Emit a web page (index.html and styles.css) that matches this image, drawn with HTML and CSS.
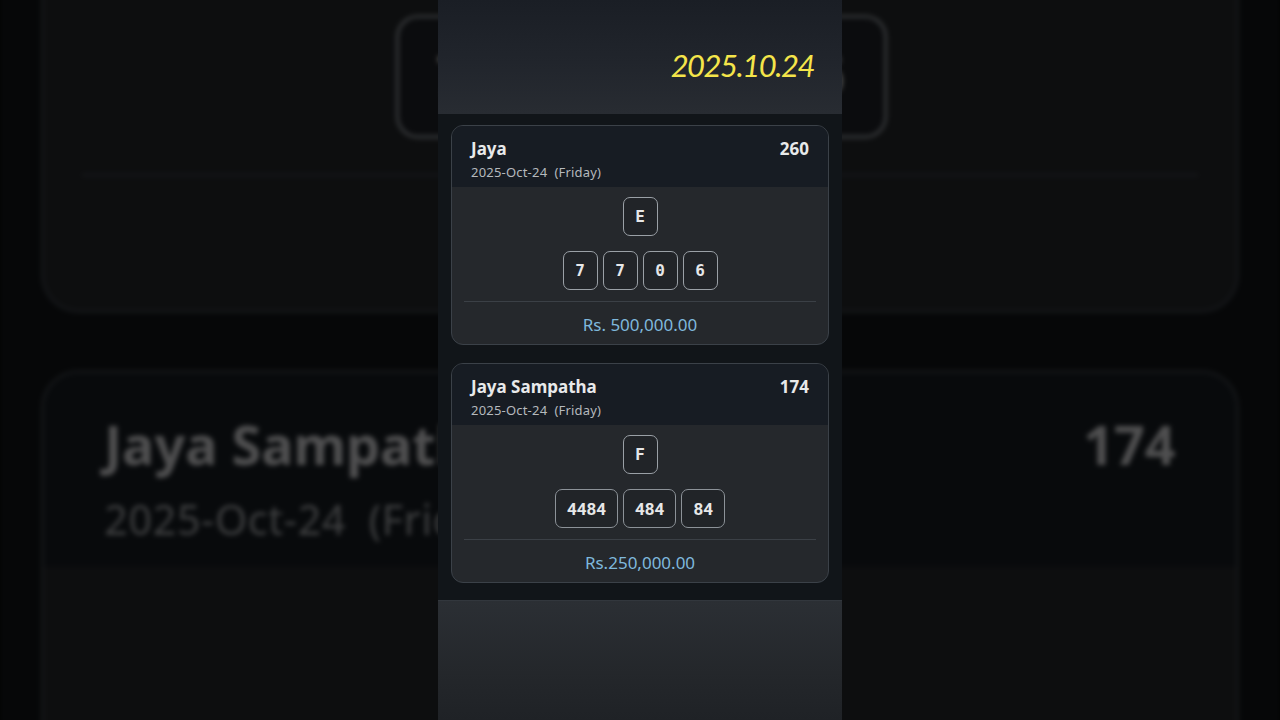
FILE: index.html
```html
<!DOCTYPE html>
<html lang="en">
<head>
<meta charset="utf-8">
<title>Results 2025.10.24</title>
<link rel="stylesheet" href="styles.css">
</head>
<body>
<div class="stage">
  <div class="column ghost" aria-hidden="true">
    <header class="hero"><span class="hero-date">2025.10.24</span></header>
    <section class="list">
      <article class="card">
        <div class="card-head">
          <div class="head-row"><span class="title">Jaya</span><span class="draw">260</span></div>
          <div class="sub">2025-Oct-24&nbsp;&nbsp;(Friday)</div>
        </div>
        <div class="card-body">
          <div class="balls"><span class="ball mono">E</span></div>
          <div class="balls"><span class="ball mono">7</span><span class="ball mono">7</span><span class="ball mono">0</span><span class="ball mono">6</span></div>
          <div class="prize">Rs. 500,000.00</div>
        </div>
      </article>
      <article class="card">
        <div class="card-head">
          <div class="head-row"><span class="title">Jaya Sampatha</span><span class="draw">174</span></div>
          <div class="sub">2025-Oct-24&nbsp;&nbsp;(Friday)</div>
        </div>
        <div class="card-body">
          <div class="balls"><span class="ball">F</span></div>
          <div class="balls"><span class="ball wide">4484</span><span class="ball wide">484</span><span class="ball wide">84</span></div>
          <div class="prize">Rs.250,000.00</div>
        </div>
      </article>
    </section>
    <footer class="foot"></footer>
  </div>

  <main class="column front">
    <header class="hero"><span class="hero-date">2025.10.24</span></header>
    <section class="list">
      <article class="card">
        <div class="card-head">
          <div class="head-row"><span class="title">Jaya</span><span class="draw">260</span></div>
          <div class="sub">2025-Oct-24&nbsp;&nbsp;(Friday)</div>
        </div>
        <div class="card-body">
          <div class="balls"><span class="ball mono">E</span></div>
          <div class="balls"><span class="ball mono">7</span><span class="ball mono">7</span><span class="ball mono">0</span><span class="ball mono">6</span></div>
          <div class="prize">Rs. 500,000.00</div>
        </div>
      </article>
      <article class="card">
        <div class="card-head">
          <div class="head-row"><span class="title">Jaya Sampatha</span><span class="draw">174</span></div>
          <div class="sub">2025-Oct-24&nbsp;&nbsp;(Friday)</div>
        </div>
        <div class="card-body">
          <div class="balls"><span class="ball">F</span></div>
          <div class="balls"><span class="ball wide">4484</span><span class="ball wide">484</span><span class="ball wide">84</span></div>
          <div class="prize">Rs.250,000.00</div>
        </div>
      </article>
    </section>
    <footer class="foot"></footer>
  </main>
</div>
</body>
</html>
```
FILE: styles.css
```css
* { box-sizing: border-box; }

html, body {
  margin: 0;
  padding: 0;
  background: #000;
}

body {
  font-family: "Noto Sans", "Open Sans", sans-serif;
  color: #e8e8e8;
}

.stage {
  width: 1280px;
  height: 720px;
  overflow: hidden;
  display: grid;
  background: #000;
}

.column {
  grid-area: 1 / 1;
  justify-self: center;
  width: 404px;
  height: 720px;
  display: flex;
  flex-direction: column;
  background: #111519;
}

.ghost {
  z-index: 0;
  transform: scale(3.17);
  transform-origin: 202px 359.8px;
  filter: brightness(0.34) blur(0.8px);
}

.front {
  z-index: 1;
}

.hero {
  height: 114px;
  flex: 0 0 114px;
  display: flex;
  align-items: center;
  justify-content: flex-end;
  padding: 16px 28px 0 0;
  background: linear-gradient(180deg, #1a1e25 0%, #21252c 55%, #282c32 100%);
}

.hero-date {
  font-family: Lato, "Noto Sans", sans-serif;
  font-style: italic;
  font-size: 31px;
  letter-spacing: -1.5px;
  color: #f4e54a;
  line-height: 1;
}

.list {
  display: flex;
  flex-direction: column;
  gap: 18px;
  padding: 11px 13px 17px;
  background: #111519;
}

.card {
  border: 1px solid #3b4148;
  border-radius: 12px;
  overflow: hidden;
  background: #25282c;
}

.card-head {
  background: #171c23;
  padding: 11px 19px 6px;
}

.head-row {
  display: flex;
  justify-content: space-between;
  align-items: center;
  height: 24px;
}

.title, .draw {
  font-weight: 700;
  font-size: 17px;
  color: #e8e9ea;
  line-height: 24px;
}

.sub {
  margin-top: 2px;
  font-size: 13px;
  letter-spacing: 0.2px;
  line-height: 18px;
  color: #b5b9bd;
}

.card-body {
  display: flex;
  flex-direction: column;
  align-items: center;
  padding: 10px 12px 0;
}

.balls {
  display: flex;
  gap: 5px;
  justify-content: center;
}

.balls + .balls {
  margin-top: 15px;
}

.ball {
  height: 39px;
  min-width: 35px;
  display: flex;
  align-items: center;
  justify-content: center;
  border: 1px solid #9aa0a6;
  border-radius: 7px;
  background: #212428;
  font-family: Roboto, "Noto Sans", sans-serif;
  font-weight: 700;
  font-size: 16px;
  color: #e6e7e8;
}

.ball.mono {
  font-family: "DejaVu Sans Mono", "Liberation Mono", monospace;
  font-size: 16px;
}

.ball.wide {
  padding: 0 11px;
  font-size: 17px;
  border-color: #8c9298;
}

.prize {
  align-self: stretch;
  margin-top: 11px;
  border-top: 1px solid #3b4046;
  padding: 12px 0 8px;
  text-align: center;
  font-size: 17px;
  line-height: 22px;
  color: #7fb8dc;
}

.foot {
  flex: 1;
  border-top: 1px solid #32373d;
  background: linear-gradient(180deg, #2b2f34 0%, #24272b 60%, #1f2226 100%);
}
```
